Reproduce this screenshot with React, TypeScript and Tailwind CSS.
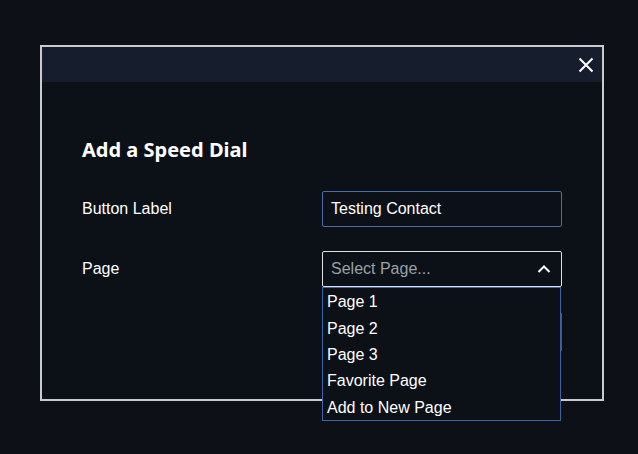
import React from 'react';

const pages = ['Page 1', 'Page 2', 'Page 3', 'Favorite Page', 'Add to New Page'];

const App: React.FC = () => {
  return (
    <div className="min-h-[454px] w-[638px] bg-[#0d1117] pt-[45px] pl-[40px] font-['Liberation_Sans',Arial,sans-serif] text-white">
      <div className="w-[564px] h-[356px] border-2 border-[#c9cbcf] bg-[#0c1017] flex flex-col">
        {/* Header */}
        <div className="h-[35px] bg-[#161e2d] flex items-center justify-end pr-[8px]">
          <svg width="16" height="16" viewBox="0 0 16 16" fill="none" stroke="white" strokeWidth="2">
            <path d="M1.5 1.5L14.5 14.5M14.5 1.5L1.5 14.5" />
          </svg>
        </div>

        {/* Body */}
        <div className="flex flex-col px-[40px] pt-[54px]">
          <h2 className="font-['Noto_Sans',sans-serif] font-bold text-[20px] leading-[28px]">Add a Speed Dial</h2>

          <div className="mt-[27px] flex items-center justify-between">
            <span className="text-[16px]">Button Label</span>
            <div className="w-[240px] h-[36px] border border-[#4a6ea8] rounded-[2px] flex items-center pl-[8px] text-[16px]">
              Testing Contact
            </div>
          </div>

          <div className="mt-[24px] flex items-center justify-between">
            <span className="text-[16px]">Page</span>
            <div className="relative w-[240px]">
              <div className="h-[36px] border border-[#dfe1e5] rounded-[2px] flex items-center justify-between pl-[8px] pr-[10px] text-[16px] text-[#9aa0a6]">
                <span>Select Page...</span>
                <svg width="14" height="10" viewBox="0 0 14 10" fill="none" stroke="white" strokeWidth="2">
                  <path d="M1.5 8L7 2.5L12.5 8" />
                </svg>
              </div>
              <ul className="absolute z-10 left-0 top-[36px] w-[239px] border border-[#3f63a8] bg-[#0c1017]">
                {pages.map((p) => (
                  <li key={p} className="h-[26.4px] flex items-center pl-[4px] pt-[2px] text-[16px] text-white">
                    {p}
                  </li>
                ))}
              </ul>
            </div>
          </div>

          <div className="mt-[25px] flex justify-end">
            <button className="w-[100px] h-[40px] border border-[#3b5a8a] rounded-[2px] text-[16px] text-white">Save</button>
          </div>
        </div>
      </div>
    </div>
  );
};

export default App;
